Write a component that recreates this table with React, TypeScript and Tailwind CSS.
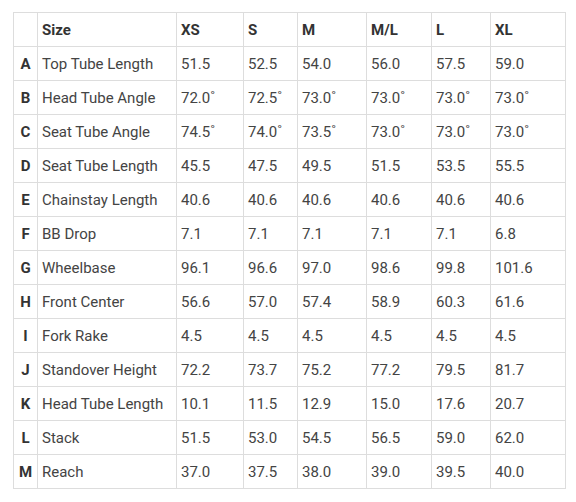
import { FC } from 'react'

const sizes = ['XS', 'S', 'M', 'M/L', 'L', 'XL']

const rows: [string, string, string[]][] = [
  ['A', 'Top Tube Length', ['51.5', '52.5', '54.0', '56.0', '57.5', '59.0']],
  ['B', 'Head Tube Angle', ['72.0˚', '72.5˚', '73.0˚', '73.0˚', '73.0˚', '73.0˚']],
  ['C', 'Seat Tube Angle', ['74.5˚', '74.0˚', '73.5˚', '73.0˚', '73.0˚', '73.0˚']],
  ['D', 'Seat Tube Length', ['45.5', '47.5', '49.5', '51.5', '53.5', '55.5']],
  ['E', 'Chainstay Length', ['40.6', '40.6', '40.6', '40.6', '40.6', '40.6']],
  ['F', 'BB Drop', ['7.1', '7.1', '7.1', '7.1', '7.1', '6.8']],
  ['G', 'Wheelbase', ['96.1', '96.6', '97.0', '98.6', '99.8', '101.6']],
  ['H', 'Front Center', ['56.6', '57.0', '57.4', '58.9', '60.3', '61.6']],
  ['I', 'Fork Rake', ['4.5', '4.5', '4.5', '4.5', '4.5', '4.5']],
  ['J', 'Standover Height', ['72.2', '73.7', '75.2', '77.2', '79.5', '81.7']],
  ['K', 'Head Tube Length', ['10.1', '11.5', '12.9', '15.0', '17.6', '20.7']],
  ['L', 'Stack', ['51.5', '53.0', '54.5', '56.5', '59.0', '62.0']],
  ['M', 'Reach', ['37.0', '37.5', '38.0', '39.0', '39.5', '40.0']],
]

const cell = 'border border-[#dddddd] h-[34px] px-[4px] py-0 text-left align-middle'

export const GeometryTable: FC = () => {
  return (
    <table className="table-fixed border-collapse w-[552px] text-[15px] leading-[20px] text-[#444444]">
      <colgroup>
        <col className="w-[24px]" />
        <col className="w-[139px]" />
        <col className="w-[67px]" />
        <col className="w-[54px]" />
        <col className="w-[69px]" />
        <col className="w-[65px]" />
        <col className="w-[59px]" />
        <col className="w-[75px]" />
      </colgroup>
      <thead>
        <tr>
          <th className={cell}></th>
          <th className={`${cell} font-bold text-[#333333]`}>Size</th>
          {sizes.map((s) => (
            <th key={s} className={`${cell} font-bold text-[#333333]`}>
              {s}
            </th>
          ))}
        </tr>
      </thead>
      <tbody>
        {rows.map(([letter, label, values]) => (
          <tr key={letter}>
            <td className={`${cell} !px-0 !text-center font-bold text-[#333333]`}>{letter}</td>
            <td className={cell}>{label}</td>
            {values.map((v, i) => (
              <td key={i} className={cell}>
                {v}
              </td>
            ))}
          </tr>
        ))}
      </tbody>
    </table>
  )
}

export default function App() {
  return (
    <div className="w-[576px] h-[502px] bg-white pl-[13px] pt-[12px] font-['Roboto',sans-serif]">
      <GeometryTable />
    </div>
  )
}
